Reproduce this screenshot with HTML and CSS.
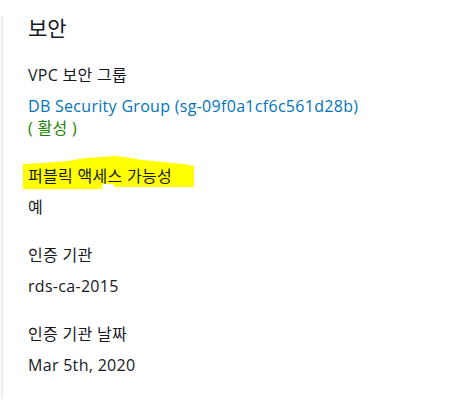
FILE: index.html
```html
<!DOCTYPE html>
<html lang="ko">
<head>
<meta charset="utf-8">
<link rel="stylesheet" href="styles.css">
</head>
<body>
<div class="panel">
  <h2 class="title">보안</h2>
  <div class="field">
    <div class="label">VPC 보안 그룹</div>
    <div class="value">
      <a class="link" href="#">DB Security Group (sg-09f0a1cf6c561d28b)</a>
      <div class="status">( 활성 )</div>
    </div>
  </div>
  <div class="field">
    <div class="label highlighted">
      <svg class="marker" viewBox="0 0 172 34" preserveAspectRatio="none" aria-hidden="true">
        <path d="M0 8 L20 7 L45 5 L62 2 L80 1 L92 0 L100 1 L120 4 L140 6 L160 8 L171 10 L171 31 L150 31 L110 31 L92 31 L90 28 L80 28 L78 33 L40 33 L0 33 Z" fill="#ffff00"/>
      </svg>
      <span class="label-text">퍼블릭 액세스 가능성</span>
    </div>
    <div class="value">예</div>
  </div>
  <div class="field">
    <div class="label">인증 기관</div>
    <div class="value">rds-ca-2015</div>
  </div>
  <div class="field">
    <div class="label">인증 기관 날짜</div>
    <div class="value">Mar 5th, 2020</div>
  </div>
</div>
</body>
</html>
```
FILE: styles.css
```css
html, body {
  margin: 0;
  padding: 0;
  background: #ffffff;
}
body {
  font-family: "Open Sans", "Noto Sans CJK KR", sans-serif;
  color: #16191f;
}
.panel {
  margin: 16px 0 0 1px;
  padding: 0 0 20px 25px;
  border-left: 2px solid #eaeded;
  min-height: 383px;
  box-sizing: border-box;
}
.title {
  margin: 0;
  font-size: 21px;
  font-weight: 400;
  line-height: 24px;
  color: #16191f;
}
.field {
  margin-top: 26px;
}
.title + .field {
  margin-top: 24px;
}
.label {
  font-size: 16px;
  line-height: 22px;
  letter-spacing: 0.3px;
  color: #16191f;
}
.value {
  margin-top: 9px;
  font-size: 16px;
  line-height: 22px;
  letter-spacing: 0.3px;
  color: #16191f;
}
.link {
  color: #0073bb;
  text-decoration: none;
}
.status {
  color: #1d8102;
}
.highlighted {
  position: relative;
  display: inline-block;
}
.marker {
  position: absolute;
  left: -5px;
  top: -9px;
  width: 172px;
  height: 34px;
  z-index: 0;
}
.label-text {
  position: relative;
  z-index: 1;
}
```
